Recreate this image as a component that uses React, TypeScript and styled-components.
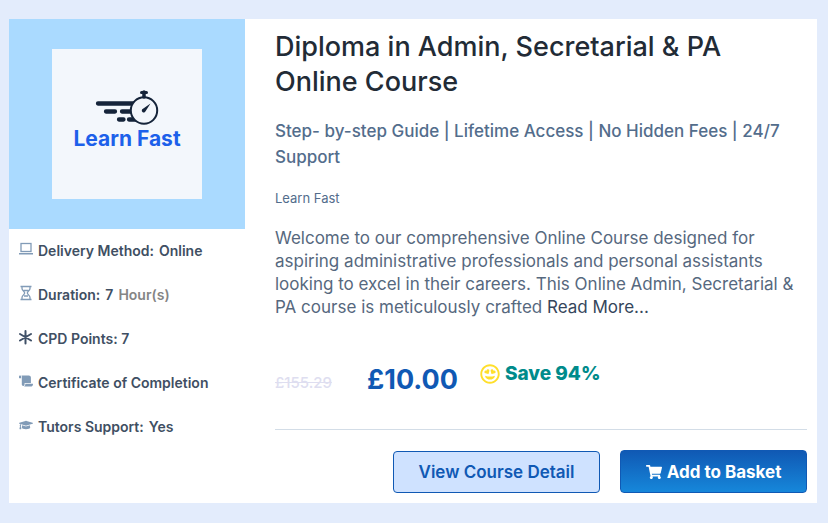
import React from "react";
import styled, { createGlobalStyle } from "styled-components";
import { FaShoppingCart, FaScroll, FaGraduationCap, FaRegGrinHearts } from "react-icons/fa";

const GlobalStyle = createGlobalStyle`
  * { box-sizing: border-box; }
  body {
    margin: 0;
    background: #e3ecfc;
    font-family: Inter, "Liberation Sans", sans-serif;
  }
  h2, h3, p, ul { margin: 0; padding: 0; }
`;

const Page = styled.main`
  padding: 19px 11px 20px 9px;
`;

const Card = styled.article`
  display: grid;
  grid-template-columns: 236px minmax(0, 1fr);
  background: #fff;
`;

const Banner = styled.div`
  display: flex;
  justify-content: center;
  padding: 30px;
  background: #aadaff;
`;

const Logo = styled.svg`
  display: block;
  width: 150px;
  height: 150px;
  background: #f3f7fc;
`;

const Facts = styled.ul`
  display: grid;
  gap: 24px;
  padding: 12px 10px;
  list-style: none;
`;

const Fact = styled.li`
  display: flex;
  gap: 5px;
  height: 20px;
  font-size: 14px;
  line-height: 20px;
  font-weight: 600;
  color: #3f4f63;
  white-space: nowrap;
`;

const FactIcon = styled.svg<{ $dark?: boolean }>`
  flex: none;
  width: 14px;
  height: 16px;
  color: ${(p) => (p.$dark ? "#3f5067" : "#819bb7")};
`;

const Unit = styled.span`
  color: #858585;
`;

const Details = styled.section`
  padding: 10px 10px 10px 30px;
`;

const Title = styled.h2`
  font-size: 27px;
  line-height: 35px;
  font-weight: 500;
  color: #222b36;
`;

const Tagline = styled.h3`
  margin-top: 19px;
  font-size: 17px;
  line-height: 26px;
  font-weight: 500;
  color: #536d8c;
`;

const Provider = styled.p`
  margin-top: 18px;
  font-size: 13px;
  line-height: 20px;
  color: #536d8c;
`;

const Description = styled.p`
  margin-top: 19px;
  font-size: 17px;
  line-height: 23px;
  color: #56687e;
`;

const ReadMore = styled.a`
  color: #35465c;
  text-decoration: none;
`;

const Prices = styled.div`
  display: flex;
  align-items: flex-start;
  margin-top: 41px;
  padding-bottom: 30px;
  border-bottom: 1px solid #d3dde7;
`;

const OldPrice = styled.del`
  width: 92px;
  padding-top: 13px;
  font-size: 15px;
  line-height: 20px;
  font-weight: 500;
  color: #dedef0;
`;

const Price = styled.strong`
  width: 113px;
  padding-top: 1px;
  font-size: 27px;
  line-height: 38px;
  font-weight: 700;
  color: #1059b4;
`;

const Saving = styled.span`
  display: flex;
  align-items: center;
  gap: 5px;
  font-size: 19px;
  line-height: 28px;
  font-weight: 800;
  color: #008b8b;

  svg { color: #ffdf2b; }
`;

const Actions = styled.div`
  display: flex;
  justify-content: flex-end;
  align-items: flex-end;
  gap: 20px;
  margin-top: 20px;
`;

const Button = styled.button<{ $primary?: boolean }>`
  display: flex;
  align-items: center;
  justify-content: center;
  gap: 5px;
  width: ${(p) => (p.$primary ? "187px" : "207px")};
  height: ${(p) => (p.$primary ? "43px" : "42px")};
  padding: 0;
  border: 1px solid #1059b4;
  border-radius: 4px;
  background: ${(p) => (p.$primary ? "linear-gradient(#1059b4, #1687da)" : "#cfe2ff")};
  color: ${(p) => (p.$primary ? "#fff" : "#1059b4")};
  font: ${(p) => (p.$primary ? 700 : 600)} 17px/24px Inter, "Liberation Sans", sans-serif;
  white-space: nowrap;
  cursor: pointer;
`;

const LaptopIcon = () => (
  <FactIcon viewBox="0 0 14 16" aria-hidden="true">
    <rect x="2" y="2.5" width="10" height="8" fill="none" stroke="currentColor" strokeWidth="1.3" />
    <path d="M0 12h14v1.500H0z" fill="currentColor" />
  </FactIcon>
);

const HourglassIcon = () => (
  <FactIcon viewBox="0 0 14 16" aria-hidden="true">
    <path d="M1.500 1.500h11M1.500 14.500h11M3 1.500v2c0 2 2.700 3 2.700 4.500S3 10.500 3 12.500v2M11 1.500v2c0 2-2.700 3-2.700 4.500s2.700 2.500 2.700 4.500v2M4.500 5.500h5M5 11h4" fill="none" stroke="currentColor" strokeWidth="1.300" />
  </FactIcon>
);

const AsteriskIcon = () => (
  <FactIcon $dark viewBox="0 0 14 16" aria-hidden="true">
    <path d="M6.500 2v12.500M1 5l11 6.500M1 11.500l11-6.500" fill="none" stroke="currentColor" strokeWidth="2" strokeLinecap="round" />
  </FactIcon>
);

const LearnFastLogo = () => (
  <Logo viewBox="0 0 150 150" role="img" aria-label="Learn Fast">
    <g stroke="#15243a" strokeLinecap="round" fill="none">
      <path d="M46 54.500h36M54 62.500h9M70 62.500h12M67 70.500h4.500M77 70.500h10" strokeWidth="4.300" />
      <circle cx="92" cy="61.500" r="13.200" strokeWidth="2" fill="#f3f7fc" />
      <path d="M92 48v-5" strokeWidth="3.500" />
      <path d="M89.500 43.500h5" strokeWidth="3" />
    </g>
    <path d="M98.500 54.500l-4.800 7.600a2 2 0 1 1-2.700-2.400z" fill="#15243a" />
    <text x="75" y="97" textAnchor="middle" fontFamily="Inter, sans-serif" fontSize="21" fontWeight="700" fill="#1c60ea">Learn Fast</text>
  </Logo>
);

export default function App() {
  return (
    <>
      <GlobalStyle />
      <Page>
        <Card>
          <aside>
            <Banner><LearnFastLogo /></Banner>
            <Facts>
              <Fact><LaptopIcon /><span>Delivery Method:</span><span>Online</span></Fact>
              <Fact><HourglassIcon /><span>Duration:</span><span>7</span><Unit>Hour(s)</Unit></Fact>
              <Fact><AsteriskIcon /><span>CPD Points: 7</span></Fact>
              <Fact><FactIcon as={FaScroll} aria-hidden="true" /><span>Certificate of Completion</span></Fact>
              <Fact><FactIcon as={FaGraduationCap} aria-hidden="true" /><span>Tutors Support:</span><span>Yes</span></Fact>
            </Facts>
          </aside>
          <Details>
            <Title>Diploma in Admin, Secretarial &amp; PA Online Course</Title>
            <Tagline>Step- by-step Guide | Lifetime Access | No Hidden Fees | 24/7 Support</Tagline>
            <Provider>Learn Fast</Provider>
            <Description>
              Welcome to our comprehensive Online Course designed for aspiring administrative professionals and personal assistants looking to excel in their careers. This Online Admin, Secretarial &amp; PA course is meticulously crafted <ReadMore href="#">Read More...</ReadMore>
            </Description>
            <Prices>
              <OldPrice>£155.29</OldPrice>
              <Price>£10.00</Price>
              <Saving><FaRegGrinHearts size={20} aria-hidden="true" />Save 94%</Saving>
            </Prices>
            <Actions>
              <Button type="button">View Course Detail</Button>
              <Button type="button" $primary><FaShoppingCart size={16} aria-hidden="true" />Add to Basket</Button>
            </Actions>
          </Details>
        </Card>
      </Page>
    </>
  );
}
